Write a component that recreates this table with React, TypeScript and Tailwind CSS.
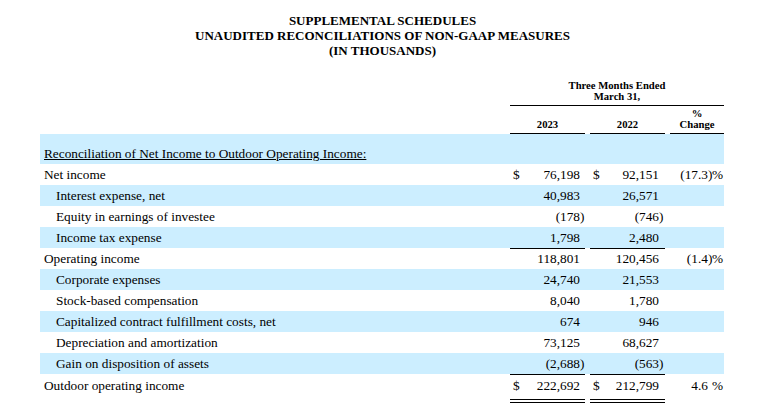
import React from "react";

type Row = {
  label: string;
  indent?: boolean;
  a: string;
  b: string;
  dollar?: boolean;
  pct?: string;
  shade?: boolean;
  rule?: "single" | "double";
};

const ROWS: Row[] = [
  { label: "Net income", a: "76,198", b: "92,151", dollar: true, pct: "(17.3)" },
  { label: "Interest expense, net", indent: true, a: "40,983", b: "26,571", shade: true },
  { label: "Equity in earnings of investee", indent: true, a: "(178)", b: "(746)" },
  { label: "Income tax expense", indent: true, a: "1,798", b: "2,480", shade: true, rule: "single" },
  { label: "Operating income", a: "118,801", b: "120,456", pct: "(1.4)" },
  { label: "Corporate expenses", indent: true, a: "24,740", b: "21,553", shade: true },
  { label: "Stock-based compensation", indent: true, a: "8,040", b: "1,780" },
  { label: "Capitalized contract fulfillment costs, net", indent: true, a: "674", b: "946", shade: true },
  { label: "Depreciation and amortization", indent: true, a: "73,125", b: "68,627" },
  { label: "Gain on disposition of assets", indent: true, a: "(2,688)", b: "(563)", shade: true, rule: "single" },
  { label: "Outdoor operating income", a: "222,692", b: "212,799", dollar: true, pct: "4.6", rule: "double" },
];

const GRID = "grid grid-cols-[470px_75px_5px_75px_5px_54px] w-[684px] ml-[40px]";

function split(v: string) {
  return v.endsWith(")") ? { text: v.slice(0, -1), paren: true } : { text: v, paren: false };
}

function NumCell({ value, dollar, slot, rule }: { value: string; dollar?: boolean; slot: string; rule?: Row["rule"] }) {
  const { text, paren } = split(value);
  const border =
    rule === "single" ? "border-b border-black" : rule === "double" ? "border-b-4 border-double border-black" : "";
  return (
    <div className={`flex justify-between pl-[3px] pr-[1px] ${border}`}>
      <span>{dollar ? "$" : ""}</span>
      <span className="flex">
        <span>{text}</span>
        <span className={slot}>{paren ? ")" : ""}</span>
      </span>
    </div>
  );
}

function PctCell({ value }: { value?: string }) {
  if (!value) return <div />;
  const { text, paren } = split(value);
  return (
    <div className="flex justify-end pr-[1px]">
      <span>{text}</span>
      <span className="w-[4px]">{paren ? ")" : ""}</span>
      <span>%</span>
    </div>
  );
}

export default function App() {
  return (
    <div className="w-[765px] h-[415px] bg-white text-black font-['Liberation_Serif','Times_New_Roman',serif] overflow-hidden">
      {/* Title */}
      <div className="pt-[13px] text-center text-[13px] font-bold leading-[15px]">
        <div>SUPPLEMENTAL SCHEDULES</div>
        <div>UNAUDITED RECONCILIATIONS OF NON-GAAP MEASURES</div>
        <div>(IN THOUSANDS)</div>
      </div>

      {/* Column headers */}
      <div className={`${GRID} h-[48px] text-[10.67px] font-bold leading-[11px]`}>
        <div className="col-start-2 col-span-5 flex flex-col items-center justify-end pb-[3px] border-b border-black">
          <div>Three Months Ended</div>
          <div>March 31,</div>
        </div>
      </div>
      <div className={`${GRID} h-[28px] text-[10.67px] font-bold leading-[11px]`}>
        <div />
        <div className="flex items-end justify-center pb-[3px] border-b border-black">2023</div>
        <div />
        <div className="flex items-end justify-center pb-[3px] border-b border-black">2022</div>
        <div />
        <div className="flex flex-col items-center justify-end pb-[3px] border-b border-black">
          <div>%</div>
          <div>Change</div>
        </div>
      </div>

      {/* Body */}
      <div className="text-[13.3px] leading-[21px]">
        <div className={`${GRID} h-[30px] bg-[#cceeff]`}>
          <div className="pt-[9px] pl-[4px] underline whitespace-nowrap">
            Reconciliation of Net Income to Outdoor Operating Income:
          </div>
        </div>
        {ROWS.map((r) => (
          <div
            key={r.label}
            className={`${GRID} ${r.rule === "double" ? "h-[29px] pt-[1px]" : "h-[21px]"} ${r.shade ? "bg-[#cceeff]" : ""}`}
          >
            <div className={`whitespace-nowrap ${r.indent ? "pl-[16px]" : "pl-[4px]"}`}>{r.label}</div>
            <NumCell value={r.a} dollar={r.dollar} slot="w-[4px]" rule={r.rule} />
            <div />
            <NumCell value={r.b} dollar={r.dollar} slot="w-[5px]" rule={r.rule} />
            <div />
            <PctCell value={r.pct} />
          </div>
        ))}
      </div>
    </div>
  );
}
